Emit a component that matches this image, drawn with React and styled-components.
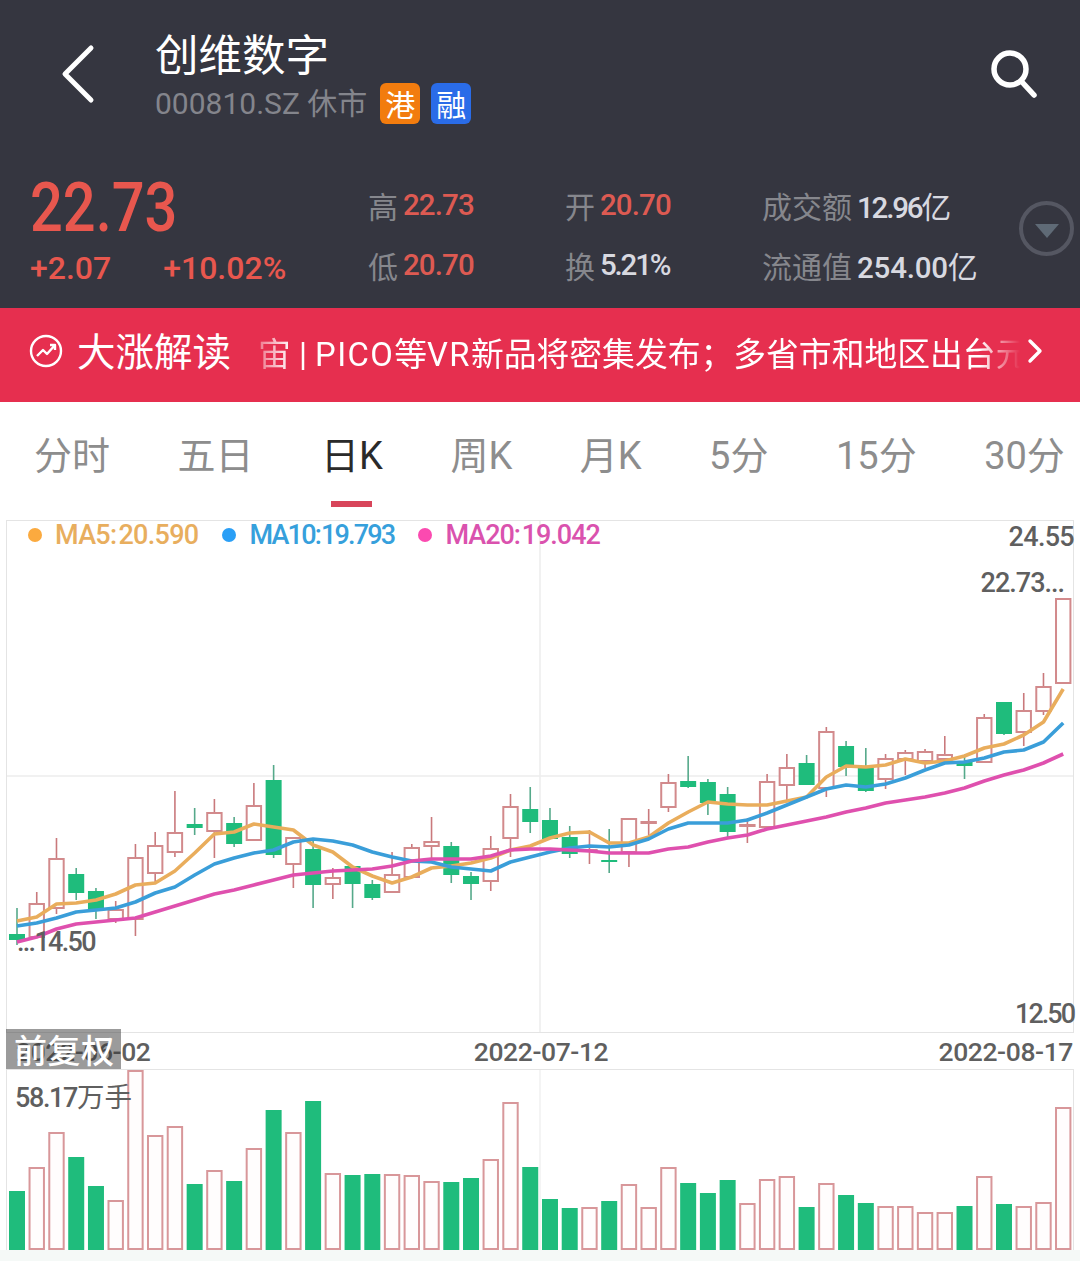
import React from "react";
import styled, { createGlobalStyle } from "styled-components";

const CJK_FONT = `"Noto Sans CJK SC", sans-serif`;
const MIX_FONT = `Roboto, "Noto Sans CJK SC", sans-serif`;

const GlobalStyle = createGlobalStyle`
  html, body {
    margin: 0;
    padding: 0;
    background: #fff;
    font-family: ${MIX_FONT};
  }
  * { box-sizing: border-box; }
`;

// [wickTop, wickBottom, bodyTop, bodyBottom, up]
const CANDLES = [
  [908, 945, 934, 939, 0], [892, 938, 903, 938, 1], [838, 914, 858, 909, 1], [868, 900, 874, 892, 0],
  [888, 919, 891, 910, 0], [901, 923, 909, 920, 1], [844, 936, 857, 920, 1], [832, 882, 845, 874, 1],
  [791, 857, 832, 853, 1], [808, 835, 824, 827, 0], [799, 858, 812, 832, 1], [817, 847, 823, 843, 0],
  [783, 841, 805, 841, 1], [765, 858, 780, 854, 0], [837, 888, 837, 865, 1], [838, 908, 849, 884, 0],
  [868, 899, 877, 885, 1], [866, 908, 866, 883, 0], [880, 900, 884, 897, 0], [852, 893, 874, 893, 1],
  [844, 878, 847, 878, 1], [817, 860, 841, 847, 1], [842, 883, 846, 874, 0], [872, 900, 876, 883, 0],
  [836, 891, 848, 882, 1], [794, 857, 806, 839, 1], [787, 833, 809, 821, 0], [808, 838, 820, 838, 0],
  [826, 858, 837, 853, 0], [830, 864, 849, 851, 1], [829, 873, 860, 861, 0], [818, 867, 818, 853, 1],
  [809, 835, 821, 824, 1], [774, 812, 782, 808, 1], [756, 788, 781, 786, 0], [779, 815, 782, 802, 0],
  [787, 839, 794, 831, 0], [818, 843, 824, 826, 1], [774, 830, 781, 828, 1], [754, 800, 767, 786, 1],
  [755, 784, 763, 784, 0], [727, 797, 731, 789, 1], [741, 776, 746, 766, 0], [748, 792, 768, 790, 0],
  [754, 789, 758, 780, 1], [750, 775, 752, 760, 1], [749, 768, 751, 762, 1], [736, 760, 754, 760, 1],
  [757, 779, 762, 765, 0], [714, 763, 717, 763, 1], [702, 735, 702, 733, 0], [693, 746, 710, 733, 1],
  [673, 715, 686, 712, 1], [598, 684, 598, 684, 1],
];

const MA5 = [
  921, 917, 904, 903, 900, 894, 885, 883, 871, 853, 834, 832, 824, 827, 830, 845, 852, 867, 876, 883,
  877, 868, 866, 863, 858, 850, 846, 838, 833, 832, 843, 843, 837, 823, 812, 802, 804, 805, 805, 801,
  797, 777, 766, 767, 765, 759, 763, 761, 756, 748, 744, 735, 722, 689,
];
const MA10 = [
  926, 923, 918, 912, 910, 908, 902, 893, 887, 875, 864, 858, 853, 850, 842, 839, 841, 845, 852, 857,
  861, 862, 867, 869, 871, 862, 857, 852, 848, 846, 847, 845, 839, 829, 823, 823, 823, 820, 813, 805,
  797, 789, 785, 787, 784, 778, 770, 763, 762, 758, 752, 750, 742, 723,
];
const MA20 = [
  942, 937, 929, 924, 922, 920, 918, 912, 906, 900, 894, 890, 885, 880, 875, 873, 871, 870, 869, 866,
  861, 859, 859, 859, 856, 850, 849, 849, 850, 851, 853, 853, 853, 849, 847, 842, 838, 835, 829, 825,
  821, 817, 812, 808, 803, 800, 797, 793, 788, 781, 775, 770, 763, 754,
];

// [top y, up]
const VOLUMES = [
  [1191, 0], [1167, 1], [1132, 1], [1157, 0], [1186, 0], [1200, 1], [1070, 1], [1135, 1], [1126, 1],
  [1184, 0], [1170, 1], [1181, 0], [1148, 1], [1110, 0], [1132, 1], [1101, 0], [1173, 1], [1175, 0],
  [1174, 0], [1174, 1], [1175, 1], [1181, 1], [1182, 0], [1178, 0], [1159, 1], [1102, 1], [1167, 0],
  [1199, 0], [1208, 0], [1207, 1], [1201, 0], [1184, 1], [1207, 1], [1167, 1], [1183, 0], [1193, 0],
  [1180, 0], [1203, 1], [1179, 1], [1176, 1], [1207, 0], [1183, 1], [1195, 0], [1203, 0], [1206, 1],
  [1206, 1], [1212, 1], [1212, 1], [1206, 0], [1176, 1], [1204, 0], [1206, 1], [1202, 1], [1107, 1],
];

const xAt = (i) => 17 + i * 19.74;
const toPoints = (values) => values.map((y, i) => `${xAt(i).toFixed(1)},${y}`).join(" ");

const TABS = ["分时", "五日", "日K", "周K", "月K", "5分", "15分", "30分"];

const Page = styled.div`
  width: 1080px;
  height: 1283px;
  background: #fff;
  overflow: hidden;
`;

const Header = styled.header`
  height: 308px;
  background: #353640;
  display: flex;
  flex-direction: column;
`;

const TopBar = styled.div`
  height: 170px;
  display: flex;
  align-items: flex-start;
  padding: 27px 40px 0 60px;
`;

const BackButton = styled.svg`
  width: 36px;
  height: 60px;
  margin-top: 17px;
  flex: none;
`;

const StockName = styled.div`
  margin-left: 59px;
  flex: 1;
`;

const StockTitle = styled.div`
  font-family: ${CJK_FONT};
  font-size: 43.5px;
  line-height: 52px;
  color: #fff;
`;

const StockMeta = styled.div`
  display: flex;
  align-items: center;
  margin-top: 4px;
  color: #84858c;
  font-size: 30px;
  line-height: 41px;
`;

const Tag = styled.span`
  width: 40px;
  height: 41px;
  border-radius: 6px;
  margin-left: ${(p) => p.$gap}px;
  background: ${(p) => p.$bg};
  color: #fff;
  font-family: ${CJK_FONT};
  font-size: 30px;
  line-height: 40px;
  text-align: center;
`;

const SearchButton = styled.svg`
  width: 52px;
  height: 56px;
  margin-top: 20px;
  flex: none;
`;

const QuoteRow = styled.div`
  position: relative;
  display: flex;
  padding-left: 30px;
`;

const PriceBlock = styled.div`
  width: 338px;
  color: #e8574e;
`;

const Price = styled.div`
  font-size: 68px;
  font-weight: 500;
  line-height: 70px;
  height: 72px;
  margin-top: 3px;
  transform: scaleX(0.85);
  transform-origin: left center;
`;

const Changes = styled.div`
  display: flex;
  gap: 52px;
  font-size: 32px;
  font-weight: 500;
  line-height: 44px;
  margin-top: 1px;
`;

const StatGrid = styled.div`
  display: grid;
  grid-template-columns: 197px 197px 1fr;
  grid-auto-rows: 60px;
  margin-top: 5px;
`;

const Stat = styled.div`
  display: flex;
  align-items: center;
  gap: 5px;
  height: 60px;
  white-space: nowrap;
`;

const StatLabel = styled.span`
  font-family: ${CJK_FONT};
  font-size: 30px;
  color: #86878d;
`;

const StatValue = styled.span`
  font-size: 29.5px;
  font-weight: 500;
  letter-spacing: ${(p) => p.$spacing ?? -0.9}px;
  color: ${(p) => (p.$up ? "#dd5a52" : "#d8d9e0")};
`;

const Unit = styled.span`
  font-family: ${CJK_FONT};
  font-weight: 400;
  font-size: 30px;
  letter-spacing: 0;
`;

const Toggle = styled.div`
  position: absolute;
  top: 31px;
  right: 6px;
  width: 55px;
  height: 55px;
  border: 4px solid #555762;
  border-radius: 50%;
  display: flex;
  align-items: center;
  justify-content: center;

  &::after {
    content: "";
    margin-top: 4px;
    border-left: 12px solid transparent;
    border-right: 12px solid transparent;
    border-top: 14px solid #5f6a76;
  }
`;

const Banner = styled.div`
  height: 94px;
  background: #e62f4f;
  display: flex;
  align-items: center;
  padding: 0 0 8px 29px;
  color: #fff;
`;

const BannerIcon = styled.svg`
  width: 34px;
  height: 34px;
  flex: none;
`;

const BannerTitle = styled.div`
  font-family: ${CJK_FONT};
  font-size: 38.5px;
  margin: 0 0 5px 14px;
  width: 154px;
  white-space: nowrap;
  flex: none;
`;

const Ticker = styled.div`
  width: 762px;
  margin-left: 27px;
  overflow: hidden;
  white-space: nowrap;
  font-size: 32.8px;
  mask-image: linear-gradient(90deg, rgba(0, 0, 0, 0.35) 0, #000 34px, #000 722px, transparent 762px);
`;

const Latin = styled.span`
  letter-spacing: 1.4px;
`;

const TickerChevron = styled.svg`
  width: 18px;
  height: 26px;
  margin-left: 6px;
  flex: none;
`;

const TabBar = styled.nav`
  height: 118px;
  display: flex;
  gap: 67.5px;
  padding: 28px 0 0 34px;
  white-space: nowrap;
`;

const Tab = styled.div`
  position: relative;
  font-size: 38px;
  line-height: 52px;
  height: 52px;
  color: ${(p) => (p.$active ? "#2a2a2a" : "#8d8d8d")};

  ${(p) =>
    p.$active &&
    `
    &::after {
      content: "";
      position: absolute;
      left: 10px;
      top: 71px;
      width: 41px;
      height: 6px;
      background: #d8455a;
    }
  `}
`;

const KlinePanel = styled.section`
  position: relative;
  width: 1068px;
  height: 513px;
  margin-left: 6px;
  border: 1px solid #e4e4e4;
`;

const ChartSvg = styled.svg`
  display: block;
  width: 100%;
  height: 100%;
`;

const Legend = styled.div`
  position: absolute;
  left: 21px;
  top: 0;
  display: flex;
  gap: 24px;
  height: 28px;
  align-items: center;
`;

const LegendItem = styled.div`
  display: flex;
  align-items: center;
  gap: 13px;
  font-size: 27px;
  font-weight: 500;
  letter-spacing: ${(p) => p.$spacing}px;
  word-spacing: -4px;
  white-space: nowrap;
  color: ${(p) => p.$text};

  &::before {
    content: "";
    width: 14px;
    height: 14px;
    border-radius: 50%;
    background: ${(p) => p.$dot};
  }
`;

const PriceTag = styled.div`
  position: absolute;
  font-size: 27px;
  font-weight: 500;
  line-height: 32px;
  letter-spacing: ${(p) => p.$spacing ?? -0.7}px;
  color: #5f5f5f;
  white-space: nowrap;
  ${(p) => p.$css}
`;

const DateRow = styled.div`
  position: relative;
  height: 36px;
  display: flex;
  justify-content: space-between;
  padding: 2px 7px 0 16px;
  font-size: 26.5px;
  font-weight: 500;
  line-height: 34px;
  letter-spacing: -0.4px;
  color: #5f5f5f;
`;

const MiddleDate = styled.span`
  margin-right: 7px;
`;

const AdjustBadge = styled.div`
  position: absolute;
  left: 6px;
  top: -4px;
  width: 115px;
  height: 40px;
  background: rgba(55, 55, 55, 0.5);
  color: #fff;
  font-family: ${CJK_FONT};
  font-size: 33px;
  line-height: 40px;
  letter-spacing: 0.5px;
  padding-left: 8px;
  white-space: nowrap;
`;

const VolumePanel = styled.section`
  position: relative;
  width: 1068px;
  height: 181px;
  margin-left: 6px;
  border: 1px solid #e4e4e4;
  border-bottom: none;
`;

const VolumeLabel = styled.div`
  position: absolute;
  left: 8px;
  top: 8px;
  font-size: 27px;
  font-weight: 500;
  line-height: 34px;
  letter-spacing: -1.4px;
  color: #5f5f5f;
  white-space: nowrap;
`;

const UnitLight = styled.span`
  font-family: ${CJK_FONT};
  font-weight: 400;
  font-size: 27.5px;
  letter-spacing: 0;
`;

const FootBand = styled.div`
  height: 11px;
  background: #f5f9f7;
`;

function KlineChart() {
  return (
    <ChartSvg viewBox="7 521 1066 511">
      <line x1="540" y1="521" x2="540" y2="1032" stroke="#ececec" strokeWidth="1.5" />
      <line x1="7" y1="776" x2="1073" y2="776" stroke="#ececec" strokeWidth="1.5" />
      {CANDLES.map(([wickTop, wickBottom, bodyTop, bodyBottom, up], i) => {
        const x = xAt(i);
        return (
          <g key={i}>
            <line
              x1={x}
              x2={x}
              y1={wickTop}
              y2={wickBottom}
              stroke={up ? "#c9797c" : "#55a98a"}
              strokeWidth="1.6"
            />
            {up ? (
              <rect
                x={x - 7.2}
                y={bodyTop + 1}
                width="14.4"
                height={Math.max(bodyBottom - bodyTop - 2, 1)}
                fill="#fff"
                stroke="#d28a8c"
                strokeWidth="2"
              />
            ) : (
              <rect x={x - 8} y={bodyTop} width="16" height={bodyBottom - bodyTop + 1} fill="#1fbc7c" />
            )}
          </g>
        );
      })}
      <polyline points={toPoints(MA5)} fill="none" stroke="#e9ad5c" strokeWidth="3.6" strokeLinejoin="round" />
      <polyline points={toPoints(MA10)} fill="none" stroke="#3a9ed9" strokeWidth="3.6" strokeLinejoin="round" />
      <polyline points={toPoints(MA20)} fill="none" stroke="#df50ae" strokeWidth="3.6" strokeLinejoin="round" />
    </ChartSvg>
  );
}

function VolumeChart() {
  return (
    <ChartSvg viewBox="7 1070 1066 180">
      <line x1="540" y1="1070" x2="540" y2="1250" stroke="#f0f0f0" strokeWidth="1.5" />
      {VOLUMES.map(([top, up], i) => {
        const x = xAt(i);
        return up ? (
          <rect
            key={i}
            x={x - 7.2}
            y={top + 1}
            width="14.4"
            height={1249 - top - 1}
            fill="#fffdfd"
            stroke="#d8979a"
            strokeWidth="2"
          />
        ) : (
          <rect key={i} x={x - 8} y={top} width="16" height={1250 - top} fill="#1fbc7c" />
        );
      })}
    </ChartSvg>
  );
}

export default function App() {
  return (
    <Page>
      <GlobalStyle />
      <Header>
        <TopBar>
          <BackButton viewBox="0 0 36 60">
            <path d="M31 4 L5 30 L31 56" fill="none" stroke="#fff" strokeWidth="5" strokeLinecap="round" strokeLinejoin="round" />
          </BackButton>
          <StockName>
            <StockTitle>创维数字</StockTitle>
            <StockMeta>
              000810.SZ 休市
              <Tag $bg="#f27c0e" $gap={13}>港</Tag>
              <Tag $bg="#2a6ce8" $gap={11}>融</Tag>
            </StockMeta>
          </StockName>
          <SearchButton viewBox="0 0 52 56">
            <circle cx="22" cy="22" r="16" fill="none" stroke="#fff" strokeWidth="5.5" />
            <path d="M34 35 L46 48" fill="none" stroke="#fff" strokeWidth="5.5" strokeLinecap="round" />
          </SearchButton>
        </TopBar>
        <QuoteRow>
          <PriceBlock>
            <Price>22.73</Price>
            <Changes>
              <span>+2.07</span>
              <span>+10.02%</span>
            </Changes>
          </PriceBlock>
          <StatGrid>
            <Stat><StatLabel>高</StatLabel><StatValue $up>22.73</StatValue></Stat>
            <Stat><StatLabel>开</StatLabel><StatValue $up>20.70</StatValue></Stat>
            <Stat><StatLabel>成交额</StatLabel><StatValue $spacing={-2.2}>12.96<Unit>亿</Unit></StatValue></Stat>
            <Stat><StatLabel>低</StatLabel><StatValue $up>20.70</StatValue></Stat>
            <Stat><StatLabel>换</StatLabel><StatValue $spacing={-2.2}>5.21%</StatValue></Stat>
            <Stat><StatLabel>流通值</StatLabel><StatValue $spacing={-0.2}>254.00<Unit>亿</Unit></StatValue></Stat>
          </StatGrid>
          <Toggle />
        </QuoteRow>
      </Header>
      <Banner>
        <BannerIcon viewBox="0 0 34 34">
          <circle cx="17" cy="17" r="15" fill="none" stroke="#fff" strokeWidth="2.4" />
          <path d="M8 22 L14 16 L18 20 L26 11 M21 11 H26 V16" fill="none" stroke="#fff" strokeWidth="2.4" strokeLinejoin="round" />
        </BannerIcon>
        <BannerTitle>大涨解读</BannerTitle>
        <Ticker>
          宙 | <Latin>PICO</Latin>等<Latin>VR</Latin>新品将密集发布；多省市和地区出台元宇宙
        </Ticker>
        <TickerChevron viewBox="0 0 18 26">
          <path d="M4 3 L14 13 L4 23" fill="none" stroke="#fff" strokeWidth="3.4" strokeLinecap="round" strokeLinejoin="round" />
        </TickerChevron>
      </Banner>
      <TabBar>
        {TABS.map((tab) => (
          <Tab key={tab} $active={tab === "日K"}>{tab}</Tab>
        ))}
      </TabBar>
      <KlinePanel>
        <KlineChart />
        <Legend>
          <LegendItem $dot="#fbaa3f" $text="#e8ae5e" $spacing={-0.7}>MA5: 20.590</LegendItem>
          <LegendItem $dot="#2a9ff6" $text="#36a0dc" $spacing={-1.8}>MA10: 19.793</LegendItem>
          <LegendItem $dot="#fb4ab0" $text="#da52ae" $spacing={-1}>MA20: 19.042</LegendItem>
        </Legend>
        <PriceTag $css="right: -1px; top: 0;">24.55</PriceTag>
        <PriceTag $spacing={-1} $css="right: 9px; top: 46px;">22.73...</PriceTag>
        <PriceTag $spacing={-1.7} $css="left: 10px; top: 405px;">...14.50</PriceTag>
        <PriceTag $spacing={-2} $css="right: -1px; bottom: 2px;">12.50</PriceTag>
      </KlinePanel>
      <DateRow>
        <span>2022-06-02</span>
        <MiddleDate>2022-07-12</MiddleDate>
        <span>2022-08-17</span>
        <AdjustBadge>前复权</AdjustBadge>
      </DateRow>
      <VolumePanel>
        <VolumeChart />
        <VolumeLabel>58.17<UnitLight>万手</UnitLight></VolumeLabel>
      </VolumePanel>
      <FootBand />
    </Page>
  );
}
